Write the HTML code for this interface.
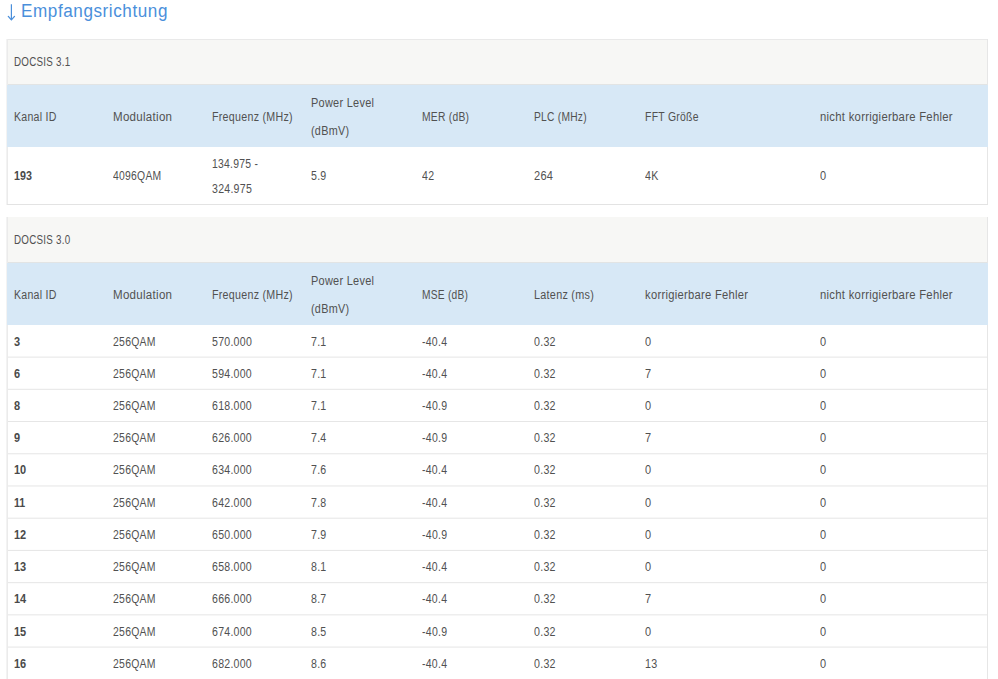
<!DOCTYPE html>
<html><head><meta charset="utf-8"><style>
html,body{margin:0;padding:0;background:#fff;width:998px;height:679px;overflow:hidden;position:relative}
.r{position:absolute}
.t,.b,.title{position:absolute;white-space:nowrap;letter-spacing:0.3px;font-family:"Liberation Sans",sans-serif;font-size:12px;line-height:12px;color:#515151;transform-origin:0 0}
.b{font-weight:bold;color:#4a4a4a;letter-spacing:0}
.title{font-size:18px;line-height:18px;color:#4a8fdb;letter-spacing:0.6px}
</style></head><body>
<div class="r" style="left:7px;top:39px;width:981px;height:1px;background:#e9e9e9"></div><div class="r" style="left:6px;top:39px;width:1px;height:166px;background:#f3f3f3"></div><div class="r" style="left:7px;top:39px;width:1px;height:166px;background:#ebebeb"></div><div class="r" style="left:987px;top:39px;width:1px;height:166px;background:#e6e6e6"></div><div class="r" style="left:7px;top:204px;width:981px;height:1px;background:#e3e3e3"></div><div class="r" style="left:8px;top:40px;width:979px;height:44px;background:#f7f7f5"></div><div class="r" style="left:8px;top:84px;width:979px;height:1px;background:#e2e4e4"></div><div class="r" style="left:7px;top:85px;width:981px;height:62px;background:#d7e8f6"></div><div class="r" style="left:6px;top:217px;width:1px;height:484px;background:#f3f3f3"></div><div class="r" style="left:7px;top:217px;width:1px;height:484px;background:#ebebeb"></div><div class="r" style="left:987px;top:217px;width:1px;height:484px;background:#e6e6e6"></div><div class="r" style="left:7px;top:700px;width:981px;height:1px;background:#e3e3e3"></div><div class="r" style="left:8px;top:217px;width:979px;height:45px;background:#f7f7f5"></div><div class="r" style="left:8px;top:262px;width:979px;height:1px;background:#e2e4e4"></div><div class="r" style="left:7px;top:263px;width:981px;height:62px;background:#d7e8f6"></div><div class="r" style="left:8px;top:356px;width:979px;height:1px;background:#f5f5f5"></div><div class="r" style="left:8px;top:357px;width:979px;height:1px;background:#efefef"></div><div class="r" style="left:8px;top:388px;width:979px;height:1px;background:#fafafa"></div><div class="r" style="left:8px;top:389px;width:979px;height:1px;background:#eaeaea"></div><div class="r" style="left:8px;top:421px;width:979px;height:1px;background:#e6e6e6"></div><div class="r" style="left:8px;top:453px;width:979px;height:1px;background:#ececec"></div><div class="r" style="left:8px;top:454px;width:979px;height:1px;background:#f8f8f8"></div><div class="r" style="left:8px;top:485px;width:979px;height:1px;background:#f1f1f1"></div><div class="r" style="left:8px;top:486px;width:979px;height:1px;background:#f3f3f3"></div><div class="r" style="left:8px;top:517px;width:979px;height:1px;background:#f7f7f7"></div><div class="r" style="left:8px;top:518px;width:979px;height:1px;background:#ededed"></div><div class="r" style="left:8px;top:549px;width:979px;height:1px;background:#fdfdfd"></div><div class="r" style="left:8px;top:550px;width:979px;height:1px;background:#e7e7e7"></div><div class="r" style="left:8px;top:582px;width:979px;height:1px;background:#e9e9e9"></div><div class="r" style="left:8px;top:583px;width:979px;height:1px;background:#fbfbfb"></div><div class="r" style="left:8px;top:614px;width:979px;height:1px;background:#eeeeee"></div><div class="r" style="left:8px;top:615px;width:979px;height:1px;background:#f6f6f6"></div><div class="r" style="left:8px;top:646px;width:979px;height:1px;background:#f4f4f4"></div><div class="r" style="left:8px;top:647px;width:979px;height:1px;background:#f0f0f0"></div>
<svg class="r" style="left:0;top:0" width="24" height="24" viewBox="0 0 24 24">
<path d="M11.4 4.3 V19.4" stroke="#4a8fdb" stroke-width="1.2" fill="none"/>
<path d="M8.3 16.4 L11.4 19.9 L14.5 16.4" stroke="#4a8fdb" stroke-width="1.3" fill="none" stroke-linejoin="round" stroke-linecap="round"/>
</svg><span class="title" style="left:21.30px;top:1.70px;transform:scaleX(0.9505)">Empfangsrichtung</span>
<span class="t" style="left:14.00px;top:56.00px;transform:scaleX(0.8160)">DOCSIS 3.1</span><span class="t" style="left:14.00px;top:111.30px;transform:scaleX(0.8806)">Kanal ID</span><span class="t" style="left:113.00px;top:111.30px;transform:scaleX(0.9609)">Modulation</span><span class="t" style="left:212.00px;top:111.30px;transform:scaleX(0.8896)">Frequenz (MHz)</span><span class="t" style="left:422.00px;top:111.30px;transform:scaleX(0.8584)">MER (dB)</span><span class="t" style="left:533.50px;top:111.30px;transform:scaleX(0.8518)">PLC (MHz)</span><span class="t" style="left:645.00px;top:111.30px;transform:scaleX(0.8699)">FFT Größe</span><span class="t" style="left:819.60px;top:111.30px;transform:scaleX(0.9411)">nicht korrigierbare Fehler</span><span class="t" style="left:311.00px;top:97.20px;transform:scaleX(0.9124)">Power Level</span><span class="t" style="left:311.00px;top:125.30px;transform:scaleX(0.9015)">(dBmV)</span><span class="b" style="left:14.00px;top:170.10px;transform:scaleX(0.8950)">193</span><span class="t" style="left:113.00px;top:170.10px;transform:scaleX(0.8630)">4096QAM</span><span class="t" style="left:212.00px;top:157.80px;transform:scaleX(0.8663)">134.975 -</span><span class="t" style="left:212.00px;top:182.90px;transform:scaleX(0.8805)">324.975</span><span class="t" style="left:311.00px;top:170.10px;transform:scaleX(0.8833)">5.9</span><span class="t" style="left:422.00px;top:170.10px;transform:scaleX(0.8791)">42</span><span class="t" style="left:533.50px;top:170.10px;transform:scaleX(0.9223)">264</span><span class="t" style="left:645.00px;top:170.10px;transform:scaleX(0.8867)">4K</span><span class="t" style="left:819.60px;top:170.10px;transform:scaleX(0.9150)">0</span><span class="t" style="left:14.00px;top:234.00px;transform:scaleX(0.8160)">DOCSIS 3.0</span><span class="t" style="left:14.00px;top:289.30px;transform:scaleX(0.8806)">Kanal ID</span><span class="t" style="left:113.00px;top:289.30px;transform:scaleX(0.9609)">Modulation</span><span class="t" style="left:212.00px;top:289.30px;transform:scaleX(0.8896)">Frequenz (MHz)</span><span class="t" style="left:422.00px;top:289.30px;transform:scaleX(0.8503)">MSE (dB)</span><span class="t" style="left:533.50px;top:289.30px;transform:scaleX(0.9013)">Latenz (ms)</span><span class="t" style="left:645.00px;top:289.30px;transform:scaleX(0.9330)">korrigierbare Fehler</span><span class="t" style="left:819.60px;top:289.30px;transform:scaleX(0.9411)">nicht korrigierbare Fehler</span><span class="t" style="left:311.00px;top:275.20px;transform:scaleX(0.9124)">Power Level</span><span class="t" style="left:311.00px;top:303.30px;transform:scaleX(0.9015)">(dBmV)</span><span class="b" style="left:14.00px;top:335.60px;transform:scaleX(0.9150)">3</span><span class="t" style="left:113.00px;top:335.60px;transform:scaleX(0.8700)">256QAM</span><span class="t" style="left:212.00px;top:335.60px;transform:scaleX(0.8805)">570.000</span><span class="t" style="left:311.00px;top:335.60px;transform:scaleX(0.8833)">7.1</span><span class="t" style="left:422.00px;top:335.60px;transform:scaleX(0.8757)">-40.4</span><span class="t" style="left:533.50px;top:335.60px;transform:scaleX(0.8866)">0.32</span><span class="t" style="left:645.00px;top:335.60px;transform:scaleX(0.9150)">0</span><span class="t" style="left:819.60px;top:335.60px;transform:scaleX(0.9150)">0</span><span class="b" style="left:14.00px;top:367.82px;transform:scaleX(0.9150)">6</span><span class="t" style="left:113.00px;top:367.82px;transform:scaleX(0.8700)">256QAM</span><span class="t" style="left:212.00px;top:367.82px;transform:scaleX(0.8786)">594.000</span><span class="t" style="left:311.00px;top:367.82px;transform:scaleX(0.8833)">7.1</span><span class="t" style="left:422.00px;top:367.82px;transform:scaleX(0.8757)">-40.4</span><span class="t" style="left:533.50px;top:367.82px;transform:scaleX(0.8866)">0.32</span><span class="t" style="left:645.00px;top:367.82px;transform:scaleX(0.9150)">7</span><span class="t" style="left:819.60px;top:367.82px;transform:scaleX(0.9150)">0</span><span class="b" style="left:14.00px;top:400.04px;transform:scaleX(0.9150)">8</span><span class="t" style="left:113.00px;top:400.04px;transform:scaleX(0.8700)">256QAM</span><span class="t" style="left:212.00px;top:400.04px;transform:scaleX(0.8786)">618.000</span><span class="t" style="left:311.00px;top:400.04px;transform:scaleX(0.8833)">7.1</span><span class="t" style="left:422.00px;top:400.04px;transform:scaleX(0.8765)">-40.9</span><span class="t" style="left:533.50px;top:400.04px;transform:scaleX(0.8866)">0.32</span><span class="t" style="left:645.00px;top:400.04px;transform:scaleX(0.9150)">0</span><span class="t" style="left:819.60px;top:400.04px;transform:scaleX(0.9150)">0</span><span class="b" style="left:14.00px;top:432.26px;transform:scaleX(0.9150)">9</span><span class="t" style="left:113.00px;top:432.26px;transform:scaleX(0.8700)">256QAM</span><span class="t" style="left:212.00px;top:432.26px;transform:scaleX(0.8786)">626.000</span><span class="t" style="left:311.00px;top:432.26px;transform:scaleX(0.8833)">7.4</span><span class="t" style="left:422.00px;top:432.26px;transform:scaleX(0.8765)">-40.9</span><span class="t" style="left:533.50px;top:432.26px;transform:scaleX(0.8866)">0.32</span><span class="t" style="left:645.00px;top:432.26px;transform:scaleX(0.9150)">7</span><span class="t" style="left:819.60px;top:432.26px;transform:scaleX(0.9150)">0</span><span class="b" style="left:14.00px;top:464.48px;transform:scaleX(0.9150)">10</span><span class="t" style="left:113.00px;top:464.48px;transform:scaleX(0.8700)">256QAM</span><span class="t" style="left:212.00px;top:464.48px;transform:scaleX(0.8786)">634.000</span><span class="t" style="left:311.00px;top:464.48px;transform:scaleX(0.8833)">7.6</span><span class="t" style="left:422.00px;top:464.48px;transform:scaleX(0.8757)">-40.4</span><span class="t" style="left:533.50px;top:464.48px;transform:scaleX(0.8866)">0.32</span><span class="t" style="left:645.00px;top:464.48px;transform:scaleX(0.9150)">0</span><span class="t" style="left:819.60px;top:464.48px;transform:scaleX(0.9150)">0</span><span class="b" style="left:14.00px;top:496.70px;transform:scaleX(0.8819)">11</span><span class="t" style="left:113.00px;top:496.70px;transform:scaleX(0.8700)">256QAM</span><span class="t" style="left:212.00px;top:496.70px;transform:scaleX(0.8786)">642.000</span><span class="t" style="left:311.00px;top:496.70px;transform:scaleX(0.8833)">7.8</span><span class="t" style="left:422.00px;top:496.70px;transform:scaleX(0.8757)">-40.4</span><span class="t" style="left:533.50px;top:496.70px;transform:scaleX(0.8866)">0.32</span><span class="t" style="left:645.00px;top:496.70px;transform:scaleX(0.9150)">0</span><span class="t" style="left:819.60px;top:496.70px;transform:scaleX(0.9150)">0</span><span class="b" style="left:14.00px;top:528.92px;transform:scaleX(0.9150)">12</span><span class="t" style="left:113.00px;top:528.92px;transform:scaleX(0.8700)">256QAM</span><span class="t" style="left:212.00px;top:528.92px;transform:scaleX(0.8786)">650.000</span><span class="t" style="left:311.00px;top:528.92px;transform:scaleX(0.8833)">7.9</span><span class="t" style="left:422.00px;top:528.92px;transform:scaleX(0.8765)">-40.9</span><span class="t" style="left:533.50px;top:528.92px;transform:scaleX(0.8866)">0.32</span><span class="t" style="left:645.00px;top:528.92px;transform:scaleX(0.9150)">0</span><span class="t" style="left:819.60px;top:528.92px;transform:scaleX(0.9150)">0</span><span class="b" style="left:14.00px;top:561.14px;transform:scaleX(0.9150)">13</span><span class="t" style="left:113.00px;top:561.14px;transform:scaleX(0.8700)">256QAM</span><span class="t" style="left:212.00px;top:561.14px;transform:scaleX(0.8786)">658.000</span><span class="t" style="left:311.00px;top:561.14px;transform:scaleX(0.8833)">8.1</span><span class="t" style="left:422.00px;top:561.14px;transform:scaleX(0.8757)">-40.4</span><span class="t" style="left:533.50px;top:561.14px;transform:scaleX(0.8866)">0.32</span><span class="t" style="left:645.00px;top:561.14px;transform:scaleX(0.9150)">0</span><span class="t" style="left:819.60px;top:561.14px;transform:scaleX(0.9150)">0</span><span class="b" style="left:14.00px;top:593.36px;transform:scaleX(0.9150)">14</span><span class="t" style="left:113.00px;top:593.36px;transform:scaleX(0.8700)">256QAM</span><span class="t" style="left:212.00px;top:593.36px;transform:scaleX(0.8786)">666.000</span><span class="t" style="left:311.00px;top:593.36px;transform:scaleX(0.8833)">8.7</span><span class="t" style="left:422.00px;top:593.36px;transform:scaleX(0.8757)">-40.4</span><span class="t" style="left:533.50px;top:593.36px;transform:scaleX(0.8866)">0.32</span><span class="t" style="left:645.00px;top:593.36px;transform:scaleX(0.9150)">7</span><span class="t" style="left:819.60px;top:593.36px;transform:scaleX(0.9150)">0</span><span class="b" style="left:14.00px;top:625.58px;transform:scaleX(0.9150)">15</span><span class="t" style="left:113.00px;top:625.58px;transform:scaleX(0.8700)">256QAM</span><span class="t" style="left:212.00px;top:625.58px;transform:scaleX(0.8786)">674.000</span><span class="t" style="left:311.00px;top:625.58px;transform:scaleX(0.8833)">8.5</span><span class="t" style="left:422.00px;top:625.58px;transform:scaleX(0.8765)">-40.9</span><span class="t" style="left:533.50px;top:625.58px;transform:scaleX(0.8866)">0.32</span><span class="t" style="left:645.00px;top:625.58px;transform:scaleX(0.9150)">0</span><span class="t" style="left:819.60px;top:625.58px;transform:scaleX(0.9150)">0</span><span class="b" style="left:14.00px;top:657.80px;transform:scaleX(0.9150)">16</span><span class="t" style="left:113.00px;top:657.80px;transform:scaleX(0.8700)">256QAM</span><span class="t" style="left:212.00px;top:657.80px;transform:scaleX(0.8786)">682.000</span><span class="t" style="left:311.00px;top:657.80px;transform:scaleX(0.8833)">8.6</span><span class="t" style="left:422.00px;top:657.80px;transform:scaleX(0.8757)">-40.4</span><span class="t" style="left:533.50px;top:657.80px;transform:scaleX(0.8866)">0.32</span><span class="t" style="left:645.00px;top:657.80px;transform:scaleX(0.8949)">13</span><span class="t" style="left:819.60px;top:657.80px;transform:scaleX(0.9150)">0</span>
</body></html>
